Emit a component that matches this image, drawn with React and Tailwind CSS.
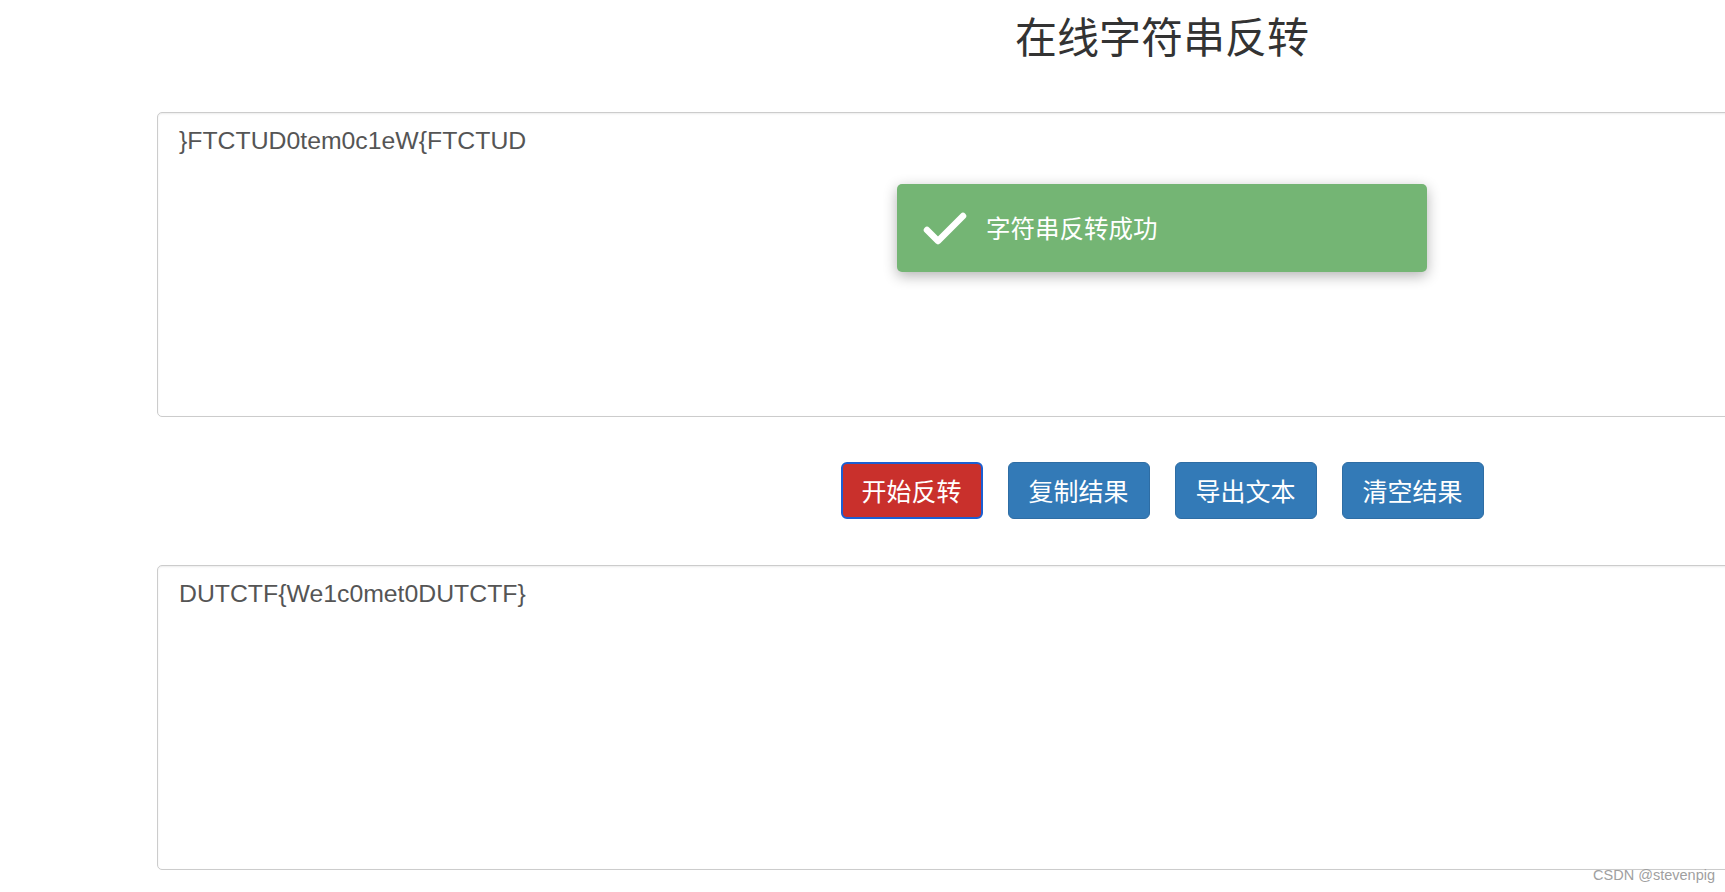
import React from "react";

const cjk = { fontFamily: '"Noto Sans CJK SC", "Noto Sans", sans-serif' };
const latin = { fontFamily: '"Liberation Sans", "Noto Sans CJK SC", Arial, sans-serif' };

// ===== Action Button =====
function ActionButton({ label, active }) {
  return (
    <button
      className={`w-[142px] h-[57px] rounded-[6px] text-white text-[25px] leading-none flex items-center justify-center ${
        active
          ? "bg-[#c9302c] border-2 border-[#1b5fd3]"
          : "bg-[#337ab7] border border-[#2e6da4]"
      }`}
      style={cjk}
    >
      {label}
    </button>
  );
}

// ===== Text Box =====
function TextBox({ value }) {
  return (
    <textarea
      readOnly
      defaultValue={value}
      className="block w-full h-[305px] resize-none rounded-[5px] border border-[#cccccc] bg-white pl-[21px] pt-[12px] pr-4 text-[24.8px] leading-[1.33] text-[#555555] shadow-[inset_0_1px_2px_rgba(0,0,0,0.08)] outline-none"
      style={latin}
    />
  );
}

export default function App() {
  return (
    <div className="relative w-[1725px] h-[892px] overflow-hidden bg-white">
      <div className="relative ml-[157px] w-[2010px]">
        {/* ===== TITLE ===== */}
        <h1
          className="pt-[12px] text-center text-[42px] leading-[46px] font-normal text-[#333333]"
          style={cjk}
        >
          在线字符串反转
        </h1>

        {/* ===== INPUT ===== */}
        <div className="mt-[54px]">
          <TextBox value="}FTCTUD0tem0c1eW{FTCTUD" />
        </div>

        {/* ===== BUTTONS ===== */}
        <div className="mt-[45px] flex justify-center gap-[25px]">
          <ActionButton label="开始反转" active />
          <ActionButton label="复制结果" />
          <ActionButton label="导出文本" />
          <ActionButton label="清空结果" />
        </div>

        {/* ===== OUTPUT ===== */}
        <div className="mt-[46px]">
          <TextBox value="DUTCTF{We1c0met0DUTCTF}" />
        </div>

        {/* ===== TOAST ===== */}
        <div className="absolute left-1/2 top-[184px] -translate-x-1/2 w-[530px] h-[88px] rounded-[5px] bg-[#74b574] shadow-[0_4px_14px_rgba(0,0,0,0.3)] flex items-center pl-[26px]">
          <svg width="44" height="34" viewBox="0 0 44 34" className="shrink-0">
            <polyline
              points="4,19 15,30 40,5"
              fill="none"
              stroke="#ffffff"
              strokeWidth="6.5"
              strokeLinecap="round"
              strokeLinejoin="round"
            />
          </svg>
          <span className="ml-[19px] text-white text-[24.5px] leading-none" style={cjk}>
            字符串反转成功
          </span>
        </div>
      </div>

      {/* ===== WATERMARK ===== */}
      <div
        className="absolute right-[10px] bottom-[9px] text-[14.5px] leading-4 text-[#a0a0a0]"
        style={latin}
      >
        CSDN @stevenpig
      </div>
    </div>
  );
}
